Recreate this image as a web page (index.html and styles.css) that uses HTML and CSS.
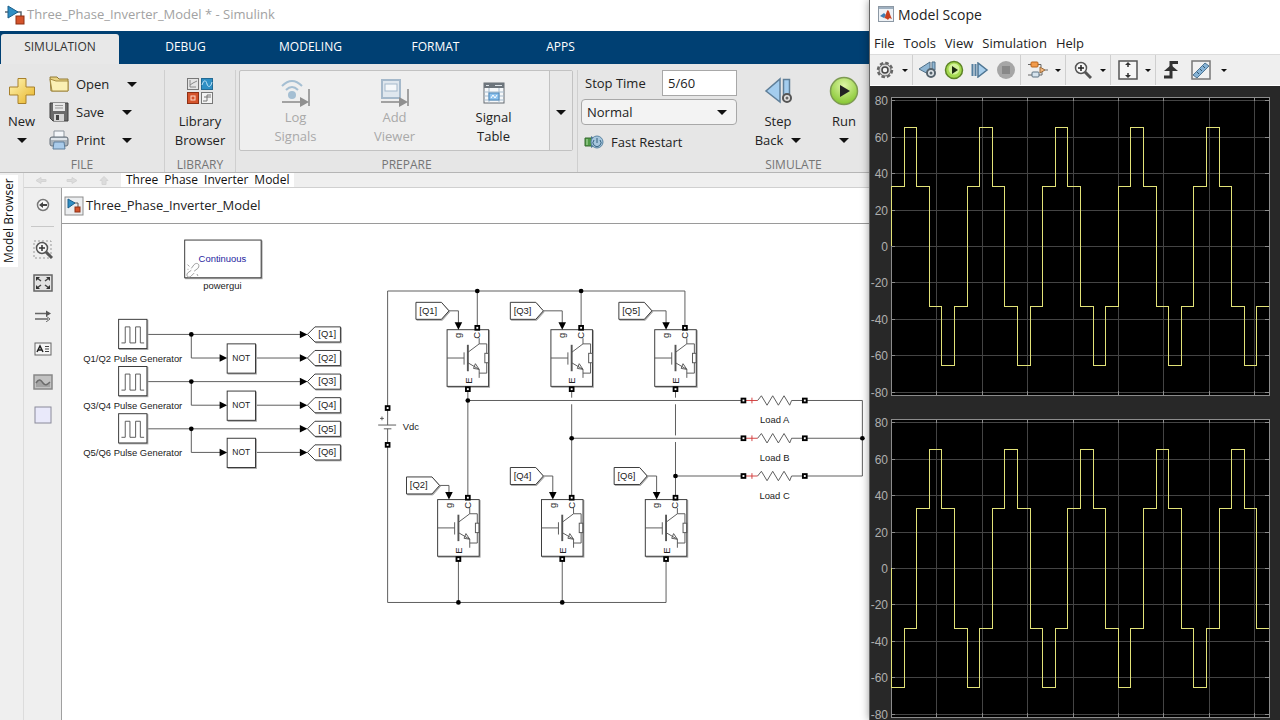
FILE: index.html
```html
<!DOCTYPE html>
<html lang="en">
<head>
    <meta charset="UTF-8">
    <meta name="viewport" content="width=device-width, initial-scale=1.0">
    <title>Three_Phase_Inverter_Model * - Simulink</title>
    <link rel="stylesheet" href="styles.css">
</head>
<body>
    <main class="simulink">
        <header class="titlebar">
            <svg width="22" height="20" viewBox="0 0 22 20">
                <path d="M0 7h3M9 7h7v5" fill="none" stroke="#5b6770" stroke-width="1.5"/>
                <path d="M3 1l10 6-10 6z" fill="#2f8fc4" stroke="#1d5f8a"/>
                <rect x="11" y="11" width="8" height="8" fill="#d4532b" stroke="#8e3014"/>
            </svg>
            <span>Three_Phase_Inverter_Model * - Simulink</span>
        </header>

        <nav class="tabs">
            <button class="tab active">SIMULATION</button>
            <button class="tab">DEBUG</button>
            <button class="tab">MODELING</button>
            <button class="tab">FORMAT</button>
            <button class="tab">APPS</button>
        </nav>

        <div class="toolstrip">
            <section class="group file-group">
                <div class="group-body">
                    <button class="big-btn">
                        <svg width="28" height="28" viewBox="0 0 28 28">
                            <defs>
                                <linearGradient id="gold" x1="0" y1="0" x2="1" y2="1">
                                    <stop offset="0" stop-color="#fff7b8"/>
                                    <stop offset="1" stop-color="#e8b325"/>
                                </linearGradient>
                            </defs>
                            <path d="M10 1.500h8v8.500h8.500v8h-8.500v8.500h-8v-8.500H1.500v-8H10z" fill="url(#gold)" stroke="#a8812c"/>
                        </svg>
                        <span>New</span>
                        <span class="line"><i class="caret"></i></span>
                    </button>
                    <div class="rows">
                        <button class="row-btn open">
                            <svg width="20" height="18" viewBox="0 0 20 18">
                                <path d="M1 2h7l2 2h9v12H2z" fill="#e9d383" stroke="#927a35"/>
                                <path d="M1 4l6 2h12v10H3z" fill="#fbf0b4" stroke="#a58c43"/>
                            </svg>
                            <span>Open</span><i class="caret"></i>
                        </button>
                        <button class="row-btn">
                            <svg width="20" height="20" viewBox="0 0 20 20">
                                <path d="M1 1h18v18H4l-3-3z" fill="#6a6a6a" stroke="#3f3f3f"/>
                                <path d="M4 1h12v8H4z" fill="#e8e8e8"/>
                                <path d="M6 3.500h8M6 6h8" stroke="#999"/>
                                <path d="M5 12h10v7H5z" fill="#d5d5d5"/>
                                <path d="M7 13h3v5H7z" fill="#444"/>
                            </svg>
                            <span>Save</span><i class="caret"></i>
                        </button>
                        <button class="row-btn">
                            <svg width="20" height="20" viewBox="0 0 20 20">
                                <path d="M5 1h10v7H5z" fill="#f4f7fa" stroke="#8b949c"/>
                                <rect x="1" y="7" width="18" height="9" rx="2" fill="#a9b2ba" stroke="#66707a"/>
                                <path d="M2 9h16" stroke="#dfe5ea" stroke-width="2"/>
                                <path d="M5 12h10l1 7H4z" fill="#a9cbea" stroke="#5f7f9c"/>
                            </svg>
                            <span>Print</span><i class="caret"></i>
                        </button>
                    </div>
                </div>
                <h2>FILE</h2>
            </section>

            <section class="group library-group">
                <div class="group-body">
                    <button class="big-btn">
                        <svg width="28" height="28" viewBox="0 0 28 28">
                            <rect x="1.500" y="1.500" width="11" height="11" fill="#e3e3e3" stroke="#777"/>
                            <path d="M4 3v7h6M4 8l3-2 4-2" fill="none" stroke="#888"/>
                            <rect x="15.500" y="1.500" width="11" height="11" fill="#2f8fc4" stroke="#236a94"/>
                            <path d="M16 8c2-6 4-5 5-1s4 3 5-2" fill="none" stroke="#bfe3f7"/>
                            <rect x="1.500" y="15.500" width="11" height="11" fill="#d4532b" stroke="#8e3014"/>
                            <rect x="5" y="19" width="4" height="4" fill="none" stroke="#ffd9c9"/>
                            <rect x="15.500" y="15.500" width="11" height="11" fill="#f3f3f3" stroke="#777"/>
                            <path d="M17 24h4v-6h4M18 20h7" fill="none" stroke="#777"/>
                        </svg>
                        <span>Library<br>Browser</span>
                    </button>
                </div>
                <h2>LIBRARY</h2>
            </section>

            <section class="group prepare-group">
                <div class="group-body">
                    <div class="gallery">
                        <button class="big-btn" disabled>
                            <svg width="30" height="28" viewBox="0 0 30 28">
                                <path d="M1 7q10-10 20 0M5 11q6-6 12 0" fill="none" stroke="#a5bfd3" stroke-width="2"/>
                                <circle cx="11" cy="16" r="4" fill="#a5bfd3"/>
                                <path d="M1 23h19M28 10v17" stroke="#a2a2a2" stroke-width="2"/>
                                <path d="M19 18l9 5-9 5z" fill="#909090"/>
                            </svg>
                            <span>Log<br>Signals</span>
                        </button>
                        <button class="big-btn" disabled>
                            <svg width="30" height="28" viewBox="0 0 30 28">
                                <rect x="2" y="1" width="18" height="18" fill="#dfe7ee" stroke="#a5b9cb" stroke-width="2"/>
                                <rect x="5" y="5" width="12" height="7" fill="#f5f8fa" stroke="#a5b9cb"/>
                                <path d="M1 23h19M28 10v17" stroke="#a2a2a2" stroke-width="2"/>
                                <path d="M19 18l9 5-9 5z" fill="#909090"/>
                            </svg>
                            <span>Add<br>Viewer</span>
                        </button>
                        <button class="big-btn">
                            <svg width="22" height="22" viewBox="0 0 22 22">
                                <rect x="1" y="1" width="20" height="20" fill="#f6f8fa" stroke="#666d73"/>
                                <path d="M1 1h20v5H1z" fill="#6d757c"/>
                                <path d="M12 3.500h7M3 3.500h3" stroke="#dfe5ea"/>
                                <path d="M1 10h20M1 14h20M1 18h20M6 6v15M16 6v15" stroke="#a8bccd"/>
                                <rect x="6" y="11" width="10" height="7" fill="#8fc3ee" stroke="#4b86b8"/>
                                <path d="M8 16l2-3 2 3 2-3" fill="none" stroke="#fff"/>
                            </svg>
                            <span>Signal<br>Table</span>
                        </button>
                        <button class="expand" aria-label="More"><i class="caret"></i></button>
                    </div>
                </div>
                <h2>PREPARE</h2>
            </section>

            <section class="group simulate-group">
                <div class="group-body">
                    <div class="sim-settings">
                        <div class="stop-time">
                            <label for="stopTime">Stop Time</label>
                            <input type="text" id="stopTime" value="5/60">
                        </div>
                        <div class="mode">
                            <select id="simMode" aria-label="Simulation mode">
                                <option>Normal</option>
                                <option>Accelerator</option>
                            </select>
                            <i class="caret"></i>
                        </div>
                        <button class="row-btn restart">
                            <svg width="20" height="16" viewBox="0 0 20 16">
                                <path d="M1 4h8v8H1z" fill="#4f9a45" stroke="#376a31"/>
                                <path d="M3 5v6" stroke="#b9e3ae"/>
                                <path d="M7 2l3 2v8l-3 2z" fill="#4a7390"/>
                                <circle cx="13" cy="8" r="6" fill="#a7c6dd" stroke="#5c86a4"/>
                                <path d="M13 4v5M10 6a4 4 0 1 0 6 0" fill="none" stroke="#32607f"/>
                            </svg>
                            <span>Fast Restart</span>
                        </button>
                    </div>
                    <button class="big-btn step-back">
                        <svg width="28" height="28" viewBox="0 0 28 28">
                            <path d="M16 2v23L2 14z" fill="#a4cdee" stroke="#5f7f99" stroke-width="1.500"/>
                            <rect x="19.500" y="2.500" width="6" height="20" fill="#a4cdee" stroke="#5f7f99" stroke-width="1.500"/>
                            <circle cx="23" cy="21" r="4" fill="#e5e5e5" stroke="#555" stroke-width="2"/>
                            <circle cx="23" cy="21" r="1.500" fill="#666"/>
                        </svg>
                        <span>Step</span>
                        <span class="line">Back <i class="caret"></i></span>
                    </button>
                    <button class="big-btn run">
                        <svg width="30" height="30" viewBox="0 0 30 30">
                            <defs>
                                <radialGradient id="green" cx=".5" cy=".3" r=".7">
                                    <stop offset="0" stop-color="#dff7a6"/>
                                    <stop offset="1" stop-color="#84c52f"/>
                                </radialGradient>
                            </defs>
                            <circle cx="15" cy="15" r="13.500" fill="url(#green)" stroke="#7d9a52" stroke-width="1.500"/>
                            <path d="M11 9l10 6-10 6z" fill="#222"/>
                        </svg>
                        <span>Run</span>
                        <span class="line"><i class="caret"></i></span>
                    </button>
                </div>
                <h2>SIMULATE</h2>
            </section>
        </div>

        <div class="workspace">
            <aside class="dock"><button>Model Browser</button></aside>

            <div class="editor">
                <div class="doc-tabs">
                    <svg width="90" height="13" viewBox="0 0 90 13">
                        <g fill="#dcdcdc" stroke="#d4d4d4">
                            <path d="M5 6.500l5-3v2h5v2h-5v2z"/>
                            <path d="M46 6.500l-5-3v2h-5v2h5v2z"/>
                            <path d="M73 2.500l-4 4h2v4h4v-4h2z"/>
                        </g>
                    </svg>
                    <span class="doc-tab"><span>Three</span> <span>Phase</span> <span>Inverter</span> <span>Model</span></span>
                </div>
                <div class="editor-main">
                    <div class="palette">
                        <button aria-label="Hide browser">
                            <svg width="14" height="14" viewBox="0 0 14 14">
                                <circle cx="7" cy="7" r="5.500" fill="#fafafa" stroke="#777" stroke-width="1.500"/>
                                <path d="M3 7l4-3v2h4v2H7v2z" fill="#444"/>
                            </svg>
                        </button>
                        <hr>
                        <button aria-label="Zoom">
                            <svg width="20" height="20" viewBox="0 0 20 20">
                                <rect x="1" y="1" width="17" height="17" fill="none" stroke="#999" stroke-dasharray="2 2"/>
                                <circle cx="9" cy="8" r="5.500" fill="#f8f8f8" stroke="#555" stroke-width="1.500"/>
                                <path d="M6 8h6M9 5v6" stroke="#333" stroke-width="1.500"/>
                                <path d="M13 12l6 6" stroke="#555" stroke-width="3"/>
                            </svg>
                        </button>
                        <button aria-label="Fit to view">
                            <svg width="20" height="18" viewBox="0 0 20 18">
                                <rect x="1" y="1" width="18" height="16" fill="#e2e2e2" stroke="#666" stroke-width="1.500"/>
                                <path d="M4 4l4 3M16 4l-4 3M4 14l4-3M16 14l-4-3" stroke="#444" stroke-width="1.500"/>
                                <path d="M3 3h4L3 7zM17 3h-4l4 4zM3 15h4l-4-4zM17 15h-4l4-4z" fill="#333"/>
                            </svg>
                        </button>
                        <button aria-label="Signal routing">
                            <svg width="18" height="12" viewBox="0 0 18 12">
                                <path d="M1 3.500h13M1 9h13" stroke="#666" stroke-width="1.500"/>
                                <path d="M12 .5l5 3-5 3z" fill="#555"/>
                                <path d="M12 6l4 3-4 3" fill="none" stroke="#666"/>
                            </svg>
                        </button>
                        <button aria-label="Annotation">
                            <svg width="18" height="14" viewBox="0 0 18 14">
                                <rect x="1" y="1" width="16" height="12" fill="#f6f6f6" stroke="#666"/>
                                <path d="M3 10l3-6 3 6M4 8h4" fill="none" stroke="#222" stroke-width="1.500"/>
                                <path d="M11 4.500h4M11 7h4M11 9.500h4" stroke="#444"/>
                            </svg>
                        </button>
                        <button aria-label="Image">
                            <svg width="20" height="16" viewBox="0 0 20 16">
                                <rect x="1" y="1" width="18" height="14" fill="#c2c2c2" stroke="#888" stroke-width="1.500"/>
                                <path d="M3 9c3-5 5-3 7 0s4 2 7-1v5H3z" fill="#a3a3a3"/>
                                <path d="M3 9c3-5 5-3 7 0s4 2 7-1" fill="none" stroke="#6c6c6c" stroke-width="1.500"/>
                            </svg>
                        </button>
                        <button aria-label="Area">
                            <svg width="18" height="18" viewBox="0 0 18 18">
                                <rect x="1" y="1" width="16" height="16" fill="#e9e9fa" stroke="#8a8a9a"/>
                            </svg>
                        </button>
                    </div>

                    <div class="sheet">
                        <div class="breadcrumb">
                            <svg width="20" height="20" viewBox="0 0 20 20">
                                <rect x="1" y="1" width="18" height="18" fill="#eceef0" stroke="#8d8d8d"/>
                                <path d="M10 7h4v4" fill="none" stroke="#555"/>
                                <path d="M4 3l7 4-7 5z" fill="#2f8fc4" stroke="#1d5f8a"/>
                                <rect x="11" y="11" width="5" height="5" fill="#d4532b" stroke="#8e3014"/>
                            </svg>
                            <a href="#">Three_Phase_Inverter_Model</a>
                        </div>

                        <svg class="canvas" viewBox="0 0 855 525" preserveAspectRatio="xMinYMin meet">
                            <defs>
                                <g id="pulse">
                                    <rect class="shade" x="1" y="1" width="30" height="31"/>
                                    <rect class="block" width="30" height="31"/>
                                    <path class="wire" d="M3 25h4V8h5v17h6V8h5v17h4"/>
                                </g>
                                <g id="not">
                                    <rect class="shade" x="1" y="1" width="30" height="31"/>
                                    <rect class="block" width="30" height="31"/>
                                    <text class="small" x="15" y="18">NOT</text>
                                </g>
                                <g id="goto">
                                    <path class="shade" d="M1 1l8-8h27V9H9z"/>
                                    <path class="block" d="M0 0l8-8h27V8H8z"/>
                                </g>
                                <g id="from">
                                    <path class="shade" d="M1-8h27l8 9-8 9H1z"/>
                                    <path class="block" d="M0-9h27l8 9-8 9H0z"/>
                                </g>
                                <!-- igbt: g at x=12, C at x=32, E at x=22 -->
                                <g id="igbt">
                                    <rect class="shade" x="1" y="1" width="44" height="60"/>
                                    <rect class="block" width="44" height="60"/>
                                    <path class="wire" d="M0 30h18M18 24v13M34 9v6l-12 9M22 35l12 7v9M34 15h8v10M42 35v11h-8"/>
                                    <path class="wire heavy" d="M22 16v28"/>
                                    <path class="wire" d="M28 41l2-5 4 6z"/>
                                    <rect class="wire" x="40" y="25" width="4" height="10"/>
                                    <path d="M8-8h8l-4 8z"/>
                                    <text transform="translate(15 6) rotate(-90)">g</text>
                                    <text transform="translate(35 6) rotate(-90)">C</text>
                                    <text transform="translate(26 54) rotate(-90)">E</text>
                                    <rect class="port" x="30" y="-4" width="4" height="4"/>
                                    <rect class="port" x="20" y="61" width="4" height="4"/>
                                </g>
                                <g id="load">
                                    <path class="plus" d="M2 0h13M9-3v6"/>
                                    <path class="wire" d="M15 0l4-5 6 10 6-10 6 10 6-10 6 10 2-5h14"/>
                                    <rect class="port" x="-2" y="-2" width="4" height="4"/>
                                    <rect class="port" x="63" y="-2" width="4" height="4"/>
                                </g>
                            </defs>

                            <!-- powergui -->
                            <rect class="shade" x="131" y="18" width="81" height="40"/>
                            <rect class="block" x="130" y="17" width="81" height="40"/>
                            <path class="link" d="M137 47l3-4c3-3 7 0 4 4l-4 3M137 49l-4 3c-2 3 1 6 4 3l3-3M133 43l2 2M133 48h1M143 53l1 2"/>
                            <text class="blue" x="170" y="40">Continuous</text>
                            <text x="170" y="69">powergui</text>

                            <!-- pulse generators -->
                            <path class="wire" d="M90 117h163M137 117v25h32M205 142h48"/>
                            <path class="wire" d="M90 167h163M137 167v25h32M205 192h48"/>
                            <path class="wire" d="M90 217h163M137 217v25h32M205 242h48"/>
                            <path d="M252 113l8 4-8 4zM252 138l8 4-8 4zM252 163l8 4-8 4zM252 188l8 4-8 4zM252 213l8 4-8 4zM252 238l8 4-8 4z"/>
                            <path d="M167 138l8 4-8 4zM167 188l8 4-8 4zM167 238l8 4-8 4z"/>
                            <circle cx="137" cy="117" r="2.500"/>
                            <circle cx="137" cy="167" r="2.500"/>
                            <circle cx="137" cy="217" r="2.500"/>
                            <use href="#pulse" x="60" y="101"/>
                            <use href="#pulse" x="60" y="151"/>
                            <use href="#pulse" x="60" y="201"/>
                            <text x="75" y="146">Q1/Q2 Pulse Generator</text>
                            <text x="75" y="196">Q3/Q4 Pulse Generator</text>
                            <text x="75" y="246">Q5/Q6 Pulse Generator</text>
                            <use href="#not" x="175" y="127"/>
                            <use href="#not" x="175" y="177"/>
                            <use href="#not" x="175" y="227"/>
                            <use href="#goto" x="260" y="117"/>
                            <use href="#goto" x="260" y="142"/>
                            <use href="#goto" x="260" y="167"/>
                            <use href="#goto" x="260" y="192"/>
                            <use href="#goto" x="260" y="217"/>
                            <use href="#goto" x="260" y="242"/>
                            <text x="281" y="120">[Q1]</text>
                            <text x="281" y="145">[Q2]</text>
                            <text x="281" y="170">[Q3]</text>
                            <text x="281" y="195">[Q4]</text>
                            <text x="281" y="220">[Q5]</text>
                            <text x="281" y="245">[Q6]</text>

                            <!-- inverter wiring -->
                            <path class="wire" d="M345 194V71h315v37M440 71v37M550 71v37"/>
                            <path class="wire" d="M345 236v165h295v-45M420 401v-45M530 401v-45"/>
                            <path class="wire" d="M430 177v111M540 177v7M540 191v97M650 177v7M650 191v33M650 231v57"/>
                            <path class="wire" d="M430 187h290M540 227h180M650 267h70M789 187h59v80h-59M789 227h59"/>
                            <circle cx="440" cy="71" r="2.500"/>
                            <circle cx="550" cy="71" r="2.500"/>
                            <circle cx="430" cy="187" r="2.500"/>
                            <circle cx="540" cy="227" r="2.500"/>
                            <circle cx="650" cy="267" r="2.500"/>
                            <circle cx="848" cy="227" r="2.500"/>
                            <circle cx="420" cy="401" r="2.500"/>
                            <circle cx="530" cy="401" r="2.500"/>

                            <!-- dc source -->
                            <path class="wire" d="M345 195v18M335 213h19M341 217h8M345 217v18M337 206h4M339 204v4"/>
                            <rect class="port" x="343" y="193" width="4" height="4"/>
                            <rect class="port" x="343" y="232" width="4" height="4"/>
                            <text class="start" x="361" y="218">Vdc</text>

                            <!-- gate signals -->
                            <path class="wire" d="M410 92h10v14M510 92h20v14M625 92h15v14"/>
                            <path class="wire" d="M400 277h10v9M510 267h10v18M620 267h10v18"/>

                            <use href="#igbt" x="408" y="112"/>
                            <use href="#igbt" x="518" y="112"/>
                            <use href="#igbt" x="628" y="112"/>
                            <use href="#igbt" x="398" y="292"/>
                            <use href="#igbt" x="508" y="292"/>
                            <use href="#igbt" x="618" y="292"/>

                            <use href="#from" x="375" y="92"/>
                            <use href="#from" x="475" y="92"/>
                            <use href="#from" x="590" y="92"/>
                            <use href="#from" x="365" y="277"/>
                            <use href="#from" x="475" y="267"/>
                            <use href="#from" x="585" y="267"/>
                            <text x="388" y="95">[Q1]</text>
                            <text x="488" y="95">[Q3]</text>
                            <text x="603" y="95">[Q5]</text>
                            <text x="378" y="280">[Q2]</text>
                            <text x="488" y="270">[Q4]</text>
                            <text x="598" y="270">[Q6]</text>

                            <use href="#load" x="722" y="187"/>
                            <use href="#load" x="722" y="227"/>
                            <use href="#load" x="722" y="267"/>
                            <text x="755" y="211">Load A</text>
                            <text x="755" y="251">Load B</text>
                            <text x="755" y="291">Load C</text>
                        </svg>
                    </div>
                </div>
            </div>
        </div>
    </main>

    <aside class="scope">
        <header class="scope-title">
            <svg width="16" height="16" viewBox="0 0 16 16">
                <rect x=".5" y=".5" width="15" height="15" fill="#eef2f6" stroke="#8c98a4"/>
                <path d="M1 2h14" stroke="#9fb0c0" stroke-width="2"/>
                <path d="M2 10l4-3 2 2-2 3z" fill="#3f7fb5"/>
                <path d="M6 12c2-1 2-7 4-8 2 2 2 6 4 9-2-1-3-1-4 1-1-1-2-2-4-2z" fill="#c8401f"/>
            </svg>
            <span>Model Scope</span>
        </header>
        <nav class="scope-menu">
            <a href="#">File</a>
            <a href="#">Tools</a>
            <a href="#">View</a>
            <a href="#">Simulation</a>
            <a href="#">Help</a>
        </nav>
        <div class="scope-tools">
            <button class="wide" aria-label="Configuration">
                <svg width="18" height="18" viewBox="0 0 18 18">
                    <circle cx="9" cy="9" r="7" fill="none" stroke="#666" stroke-width="2.500" stroke-dasharray="3.500 2"/>
                    <circle cx="9" cy="9" r="6" fill="#d8d8d8" stroke="#666"/>
                    <circle cx="9" cy="9" r="3" fill="#f5f5f5" stroke="#444" stroke-width="1.500"/>
                </svg>
            </button>
            <button class="drop" aria-label="Configuration menu"><i class="caret"></i></button>
            <i class="sep"></i>
            <button aria-label="Step back options">
                <svg width="20" height="18" viewBox="0 0 20 18">
                    <path d="M12 1v13L1 8z" fill="#8fb6d3" stroke="#4f6f87"/>
                    <path d="M14 1h3v8h-3z" fill="#8fb6d3" stroke="#4f6f87"/>
                    <circle cx="13" cy="12" r="4" fill="#e3e8ec" stroke="#56636d" stroke-width="2"/>
                    <circle cx="13" cy="12" r="1.500" fill="#56636d"/>
                </svg>
            </button>
            <button aria-label="Run">
                <svg width="20" height="20" viewBox="0 0 20 20">
                    <circle cx="10" cy="10" r="8.500" fill="#a4d94f" stroke="#5d8426" stroke-width="1.500"/>
                    <circle cx="10" cy="9" r="5.500" fill="#d3f29a"/>
                    <path d="M8 6l6 4-6 4z" fill="#1d2a10"/>
                </svg>
            </button>
            <button aria-label="Step forward">
                <svg width="18" height="16" viewBox="0 0 18 16">
                    <path d="M1.500 2v12M4.500 2v12" stroke="#557f9f" stroke-width="2"/>
                    <path d="M7 1v14l9-7z" fill="#a9cfec" stroke="#4f7693" stroke-width="1.500"/>
                </svg>
            </button>
            <button aria-label="Stop">
                <svg width="20" height="20" viewBox="0 0 20 20">
                    <circle cx="10" cy="10" r="9" fill="#a6a6a6"/>
                    <rect x="6" y="6" width="8" height="8" fill="#888"/>
                </svg>
            </button>
            <i class="sep"></i>
            <button class="wide" aria-label="Signal selector">
                <svg width="20" height="18" viewBox="0 0 20 18">
                    <path d="M0 3.500h13v3M0 14h14v-3M17 9h3" fill="none" stroke="#666"/>
                    <rect x="3" y="1" width="7" height="5" rx="1" fill="#f29b4c" stroke="#b9651b"/>
                    <rect x="4" y="11" width="7" height="5" rx="1" fill="#d7e4ee" stroke="#5d7383"/>
                    <path d="M12 6l5 3-5 3z" fill="#f3b67b" stroke="#9a6a3a"/>
                </svg>
            </button>
            <button class="drop" aria-label="Signal selector menu"><i class="caret"></i></button>
            <i class="sep"></i>
            <button class="wide" aria-label="Zoom">
                <svg width="18" height="18" viewBox="0 0 18 18">
                    <circle cx="7" cy="7" r="5.500" fill="#f8f8f8" stroke="#555" stroke-width="1.500"/>
                    <path d="M4 7h6M7 4v6" stroke="#222" stroke-width="1.500"/>
                    <path d="M11 11l6 6" stroke="#555" stroke-width="3"/>
                </svg>
            </button>
            <button class="drop" aria-label="Zoom menu"><i class="caret"></i></button>
            <i class="sep"></i>
            <button class="wide" aria-label="Scale axes">
                <svg width="20" height="20" viewBox="0 0 20 20">
                    <rect x="1" y="1" width="18" height="18" fill="#f6f6f6" stroke="#555" stroke-width="1.500"/>
                    <path d="M10 3v4M10 13v4" stroke="#333" stroke-width="1.500"/>
                    <path d="M10 2l3 3H7zM10 18l3-3H7z" fill="#333"/>
                </svg>
            </button>
            <button class="drop" aria-label="Scale axes menu"><i class="caret"></i></button>
            <i class="sep"></i>
            <button aria-label="Triggers">
                <svg width="18" height="20" viewBox="0 0 18 20">
                    <path d="M16 2.500H9V17H2" fill="none" stroke="#333" stroke-width="3"/>
                    <path d="M2 11l7-6 7 6z" fill="#333"/>
                </svg>
            </button>
            <button class="ruler" aria-label="Measurements">
                <svg width="20" height="20" viewBox="0 0 20 20">
                    <rect x="1" y="1" width="18" height="18" fill="#f1f1f1" stroke="#777" stroke-width="1.500"/>
                    <path d="M2 15L14 3l4 3L6 18z" fill="#86b3d6" stroke="#4f7693"/>
                    <path d="M6 12l2 2M9 9l2 2M12 6l2 2" stroke="#34566f"/>
                </svg>
            </button>
            <button class="drop" aria-label="Measurements menu"><i class="caret"></i></button>
        </div>
        <div class="plots">
            <svg class="plot" data-levels="1,2,1,-1,-2,-1" viewBox="0 0 410 322"></svg>
            <svg class="plot" data-levels="-2,-1,1,2,1,-1" viewBox="0 0 410 322"></svg>
        </div>
    </aside>

    <script>
        const left = 21, right = 399, upper = 11, lower = 309, zero = 160;
        const scale = 36.4 / 20;

        function drawPlot(svg) {
            const levels = svg.dataset.levels.split(',').map(Number);
            let grid = '', ticks = '', labels = '';

            for (let i = 1; i <= 8; i++) {
                const x = Math.round(left + i * 45.4);
                grid += `M${x} ${upper}V${lower}`;
                ticks += `M${x} ${upper}v4M${x} ${lower}v-4`;
            }
            for (let v = -80; v <= 80; v += 20) {
                const y = Math.round(zero - v * scale);
                grid += `M${left} ${y}H${right}`;
                ticks += `M${left} ${y}h4M${right} ${y}h-4`;
                labels += `<text x="18" y="${y + 5}">${v}</text>`;
            }

            // six steps per period, five periods
            let trace = `M${left} ${zero}`;
            for (let i = 0; i < 30; i++) {
                const y = Math.round(zero - levels[i % 6] * 32.7 * scale);
                trace += `V${y}H${Math.round(left + (i + 1) * 12.6)}`;
            }

            svg.innerHTML = `
                <rect x="${left}" y="${upper}" width="${right - left}" height="${lower - upper}"/>
                <path class="grid" d="${grid}"/>
                <path class="frame" d="${ticks}M${left} ${upper}H${right}V${lower}H${left}z"/>
                <path class="trace" d="${trace}"/>
                ${labels}`;
        }

        document.querySelectorAll('.plot').forEach(drawPlot);
    </script>
</body>
</html>
```
FILE: styles.css
```css
* {
    box-sizing: border-box;
}
body {
    margin: 0;
    height: 100vh;
    display: flex;
    overflow: hidden;
    font-family: "Open Sans", "Noto Sans", sans-serif;
    font-size: 13px;
    line-height: 19px;
    color: #222;
    background: #fff;
}
button {
    font: inherit;
    color: inherit;
    background: none;
    border: none;
    padding: 0;
    cursor: pointer;
}
button:disabled {
    color: #a9a9a9;
}
svg {
    display: block;
    flex: none;
}
a {
    color: inherit;
    text-decoration: none;
}
.caret {
    display: inline-block;
    border: 5px solid transparent;
    border-top-color: #111;
    border-bottom: none;
}

/* simulink window */
.simulink {
    flex: 1;
    min-width: 0;
    display: flex;
    flex-direction: column;
    overflow: hidden;
}
.titlebar {
    flex: none;
    height: 31px;
    display: flex;
    align-items: center;
    padding: 0 0 2px 5px;
    color: #a2a2a2;
}
.tabs {
    flex: none;
    display: flex;
    height: 33px;
    padding: 3px 0 0 1px;
    background: #004073;
}
.tab {
    width: 125px;
    padding-bottom: 5px;
    font-size: 12px;
    color: #fff;
}
.tab.active {
    width: 118px;
    margin-right: 4px;
    background: #e8e8e8;
    color: #333;
    border-radius: 3px 3px 0 0;
}

.toolstrip {
    flex: none;
    display: flex;
    height: 109px;
    padding-top: 6px;
    background: #e6e6e6;
    border-bottom: 1px solid #b5b5b5;
}
.group {
    flex: none;
    display: flex;
    flex-direction: column;
    border-right: 1px solid #cfcfcf;
}
.group-body {
    flex: 1;
    display: flex;
}
.group h2 {
    margin: 0;
    font-size: 12px;
    font-weight: normal;
    line-height: 15px;
    text-align: center;
    color: #757575;
}
.file-group {
    width: 165px;
}
.library-group {
    width: 71px;
}
.prepare-group {
    width: 342px;
}
.simulate-group {
    width: 432px;
}

.big-btn {
    display: flex;
    flex-direction: column;
    align-items: center;
    width: 100%;
    padding-top: 6px;
}
.big-btn svg {
    height: 30px;
    margin-bottom: 6px;
}
.line {
    display: flex;
    align-items: center;
    justify-content: center;
    gap: 8px;
    height: 19px;
}
.file-group .big-btn {
    width: 43px;
}
.rows {
    padding-left: 6px;
}
.row-btn {
    display: flex;
    align-items: center;
    width: 88px;
    height: 28px;
}
.row-btn svg {
    margin-right: 7px;
}
.row-btn .caret {
    margin-left: auto;
    margin-right: 5px;
}
.row-btn.open .caret {
    margin-right: 0;
}

.gallery {
    display: flex;
    width: 334px;
    height: 81px;
    margin-left: 3px;
    padding-left: 6px;
    background: #efefef;
    border: 1px solid #c2c2c2;
    border-radius: 2px;
}
.gallery .big-btn {
    width: 99px;
    padding-top: 7px;
}
.gallery .big-btn svg {
    margin-bottom: 0;
}
.expand {
    flex: 1;
    margin-left: 6px;
    border-left: 1px solid #c2c2c2;
    background: #e8e8e8;
}

.sim-settings {
    width: 156px;
    margin: 0 9px 0 3px;
}
.stop-time {
    display: flex;
    align-items: center;
    justify-content: space-between;
    padding-left: 4px;
}
.stop-time input {
    width: 75px;
    height: 26px;
    padding: 0 5px;
    font: inherit;
    color: inherit;
    background: #fff;
    border: 1px solid #a8a8a8;
}
.mode {
    position: relative;
    margin: 3px 0;
}
.mode select {
    display: block;
    width: 100%;
    height: 26px;
    padding: 0 5px;
    font: inherit;
    color: inherit;
    appearance: none;
    background: #f3f3f3;
    border: 1px solid #a8a8a8;
    border-radius: 4px;
}
.mode .caret {
    position: absolute;
    right: 10px;
    top: 11px;
    pointer-events: none;
}
.row-btn.restart {
    width: 100%;
    padding-left: 3px;
}
.step-back {
    width: 64px;
}
.run {
    width: 68px;
}

/* editor */
.workspace {
    flex: 1;
    display: flex;
    min-height: 0;
    background: #efefef;
}
.dock {
    flex: none;
    width: 24px;
    padding-top: 2px;
    border-right: 1px solid #dcdcdc;
}
.dock button {
    width: 18px;
    height: 92px;
    font-size: 12px;
    line-height: 18px;
    writing-mode: vertical-rl;
    transform: rotate(180deg);
    color: #111;
    background: #fff;
}
.editor {
    flex: 1;
    min-width: 0;
    display: flex;
    flex-direction: column;
}
.doc-tabs {
    flex: none;
    display: flex;
    align-items: flex-end;
    height: 15px;
    padding-left: 7px;
    border-bottom: 1px solid #d0d0d0;
}
.doc-tab {
    display: flex;
    gap: 6px;
    padding: 0 5px;
    font-size: 12px;
    line-height: 14px;
    color: #111;
    background: #fff;
}
.editor-main {
    flex: 1;
    display: flex;
    min-height: 0;
}
.palette {
    flex: none;
    width: 38px;
    border-right: 1px solid #a0a0a0;
}
.palette button {
    display: flex;
    align-items: center;
    justify-content: center;
    width: 100%;
    height: 33px;
}
.palette hr {
    margin: 5px 7px 6px;
    border: none;
    border-top: 1px solid #c8c8c8;
}
.sheet {
    flex: 1;
    min-width: 0;
    display: flex;
    flex-direction: column;
    background: #fff;
}
.breadcrumb {
    flex: none;
    display: flex;
    align-items: center;
    gap: 2px;
    height: 36px;
    padding-left: 2px;
    border-bottom: 1px solid #9a9a9a;
}
.canvas {
    width: 100%;
    font-family: "Liberation Sans", Arial, sans-serif;
    font-size: 10px;
}
.canvas text {
    text-anchor: middle;
    fill: #222;
}
.canvas .start {
    text-anchor: start;
}
.canvas .small {
    font-size: 9px;
}
.canvas .blue {
    fill: #2626a0;
}
.block {
    fill: #fff;
    stroke: #333;
}
.shade {
    fill: #aaa;
    stroke: #aaa;
}
.wire {
    fill: none;
    stroke: #555;
}
.heavy {
    stroke-width: 2;
}
.link {
    fill: none;
    stroke: #999;
}
.port {
    fill: #fff;
    stroke: #000;
    stroke-width: 2;
}
.plus {
    fill: none;
    stroke: #d23c3c;
}

/* scope window */
.scope {
    flex: none;
    width: 411px;
    display: flex;
    flex-direction: column;
    border-left: 1px solid #666;
    background: #fff;
    box-shadow: 0 0 8px rgba(0, 0, 0, 0.4);
}
.scope-title {
    flex: none;
    display: flex;
    align-items: center;
    gap: 4px;
    height: 30px;
    padding: 0 0 2px 8px;
    font-size: 14px;
}
.scope-menu {
    flex: none;
    display: flex;
    gap: 9px;
    height: 24px;
    padding: 4px 0 0 4px;
}
.scope-tools {
    flex: none;
    display: flex;
    align-items: center;
    height: 32px;
    background: #efefef;
    border-top: 1px solid #dcdcdc;
    border-bottom: 1px solid #fff;
}
.scope-tools button {
    display: flex;
    align-items: center;
    justify-content: center;
    width: 26px;
    height: 28px;
}
.scope-tools .wide {
    width: 29px;
}
.scope-tools .ruler {
    width: 34px;
}
.scope-tools .drop {
    width: 12px;
}
.scope-tools .caret {
    border-width: 3px;
    border-bottom: none;
}
.sep {
    width: 1px;
    height: 30px;
    margin: 0 2px 0 1px;
    background: #cfcfcf;
}
.plots {
    flex: 1;
    min-height: 0;
    overflow: hidden;
    background: #282828;
}
.plot {
    width: 100%;
    font-family: "Liberation Sans", Arial, sans-serif;
    font-size: 12px;
}
.plot text {
    text-anchor: end;
    fill: #afafaf;
}
.plot path {
    fill: none;
    shape-rendering: crispEdges;
}
.grid {
    stroke: #444;
}
.frame {
    stroke: #8c8c8c;
}
.trace {
    stroke: #e2e278;
}
```
